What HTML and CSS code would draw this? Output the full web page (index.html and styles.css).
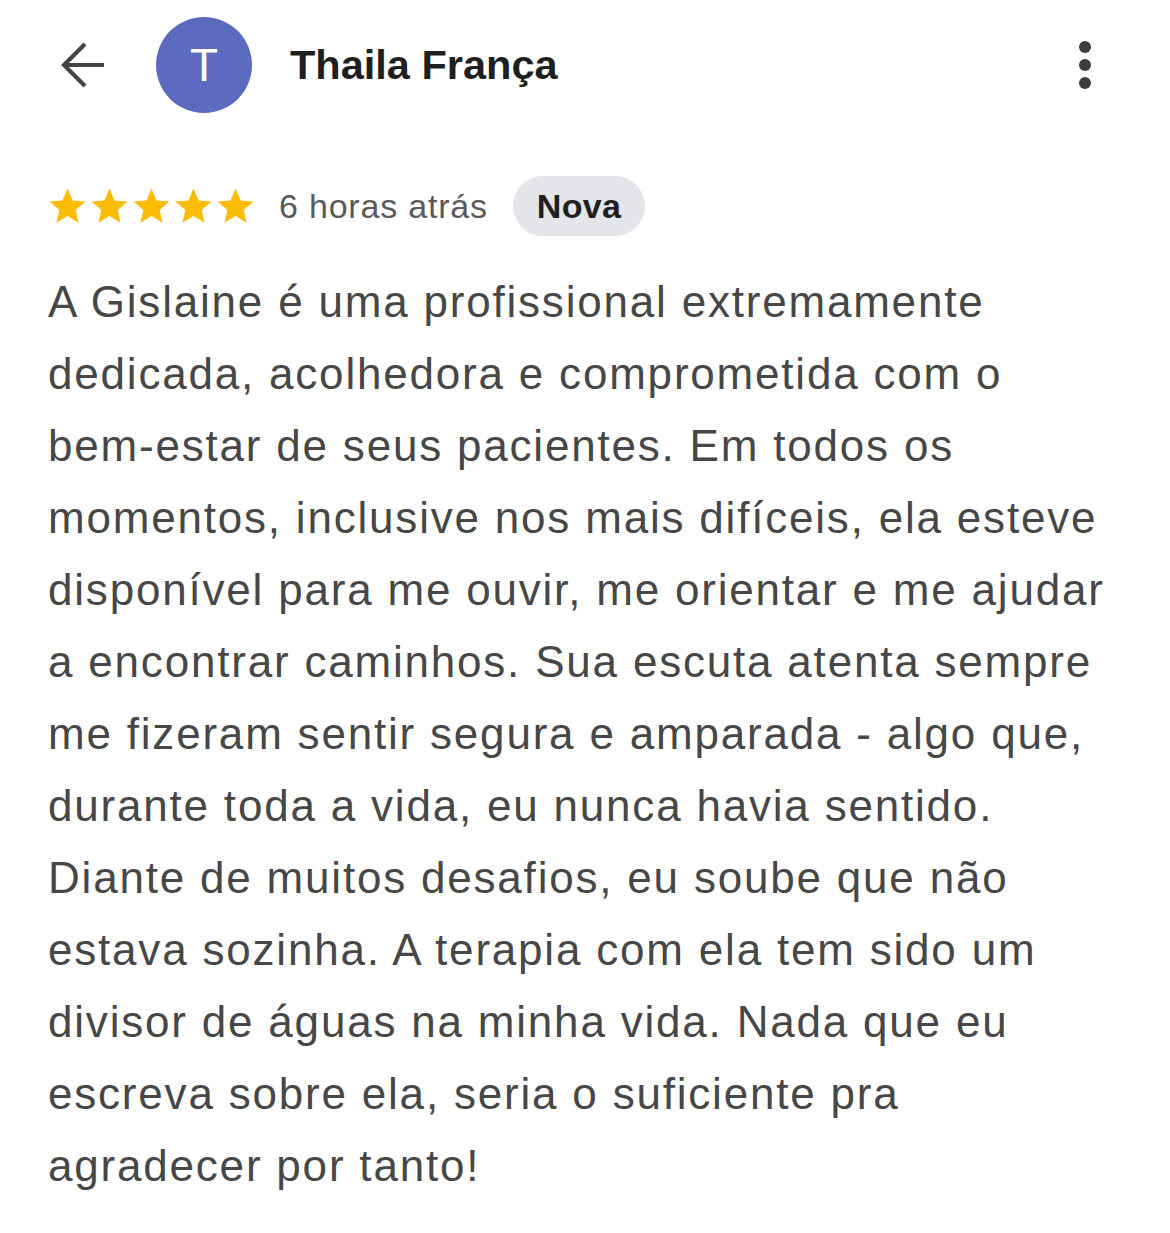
FILE: index.html
```html
<!DOCTYPE html>
<html lang="pt">
<head>
<meta charset="utf-8">
<link rel="stylesheet" href="styles.css">
</head>
<body>
<div class="page">
  <header class="top">
    <svg class="back" viewBox="0 0 50 50" width="50" height="50"><path d="M46 25H6M27 4L6 25l21 21" fill="none" stroke="#444" stroke-width="4.2"/></svg>
    <div class="avatar">T</div>
    <div class="name">Thaila França</div>
    <div class="more"><span></span><span></span><span></span></div>
  </header>
  <div class="meta">
    <div class="stars">
      <svg viewBox="0 0 24 24" width="43" height="43"><path d="M12 17.27L18.18 21l-1.64-7.03L22 9.24l-7.19-.61L12 2 9.19 8.63 2 9.24l5.46 4.73L5.82 21z" fill="#fbbc04"/></svg>
      <svg viewBox="0 0 24 24" width="43" height="43"><path d="M12 17.27L18.18 21l-1.64-7.03L22 9.24l-7.19-.61L12 2 9.19 8.63 2 9.24l5.46 4.73L5.82 21z" fill="#fbbc04"/></svg>
      <svg viewBox="0 0 24 24" width="43" height="43"><path d="M12 17.27L18.18 21l-1.64-7.03L22 9.24l-7.19-.61L12 2 9.19 8.63 2 9.24l5.46 4.73L5.82 21z" fill="#fbbc04"/></svg>
      <svg viewBox="0 0 24 24" width="43" height="43"><path d="M12 17.27L18.18 21l-1.64-7.03L22 9.24l-7.19-.61L12 2 9.19 8.63 2 9.24l5.46 4.73L5.82 21z" fill="#fbbc04"/></svg>
      <svg viewBox="0 0 24 24" width="43" height="43"><path d="M12 17.27L18.18 21l-1.64-7.03L22 9.24l-7.19-.61L12 2 9.19 8.63 2 9.24l5.46 4.73L5.82 21z" fill="#fbbc04"/></svg>
    </div>
    <span class="time">6 horas atrás</span>
    <span class="chip">Nova</span>
  </div>
  <p class="review">A Gislaine é uma profissional extremamente<br>dedicada, acolhedora e comprometida com o<br>bem-estar de seus pacientes. Em todos os<br>momentos, inclusive nos mais difíceis, ela esteve<br>disponível para me ouvir, me orientar e me ajudar<br>a encontrar caminhos. Sua escuta atenta sempre<br>me fizeram sentir segura e amparada - algo que,<br>durante toda a vida, eu nunca havia sentido.<br>Diante de muitos desafios, eu soube que não<br>estava sozinha. A terapia com ela tem sido um<br>divisor de águas na minha vida. Nada que eu<br>escreva sobre ela, seria o suficiente pra<br>agradecer por tanto!</p>
</div>
</body>
</html>
```
FILE: styles.css
```css
html, body {
  margin: 0;
  padding: 0;
  background: #ffffff;
}
body {
  font-family: "Liberation Sans", Arial, sans-serif;
}
.page {
  width: 1170px;
  height: 1233px;
  box-sizing: border-box;
  padding: 16px 48px 0 48px;
}
.top {
  display: flex;
  align-items: center;
  height: 98px;
}
.back {
  margin-left: 10px;
  flex: none;
}
.avatar {
  margin-left: 48px;
  width: 96px;
  height: 96px;
  border-radius: 50%;
  background: #5c6bc0;
  color: #fff;
  font-size: 46px;
  display: flex;
  align-items: center;
  justify-content: center;
  flex: none;
}
.name {
  margin-left: 38px;
  font-size: 41.5px;
  font-weight: 700;
  color: #1f1f1f;
  flex: 1;
}
.more {
  display: flex;
  flex-direction: column;
  gap: 6px;
  margin-right: 31px;
}
.more span {
  width: 12px;
  height: 12px;
  border-radius: 50%;
  background: #3c3c3c;
}
.meta {
  display: flex;
  align-items: center;
  margin-top: 62px;
  height: 60px;
}
.stars {
  display: flex;
  margin-left: -1px;
}
.stars svg {
  margin-left: -1px;
}
.time {
  margin-left: 22px;
  font-size: 34px;
  letter-spacing: 0.8px;
  color: #5a5a5a;
}
.chip {
  margin-left: 25px;
  background: #e3e5e8;
  border-radius: 30px;
  height: 60px;
  padding: 0 24px;
  display: flex;
  align-items: center;
  font-size: 34px;
  font-weight: 700;
  letter-spacing: 0.3px;
  color: #1f1f1f;
}
.review {
  margin: 30px 0 0 0;
  font-size: 44px;
  letter-spacing: 1.8px;
  line-height: 72px;
  color: #474747;
  white-space: nowrap;
}
```
